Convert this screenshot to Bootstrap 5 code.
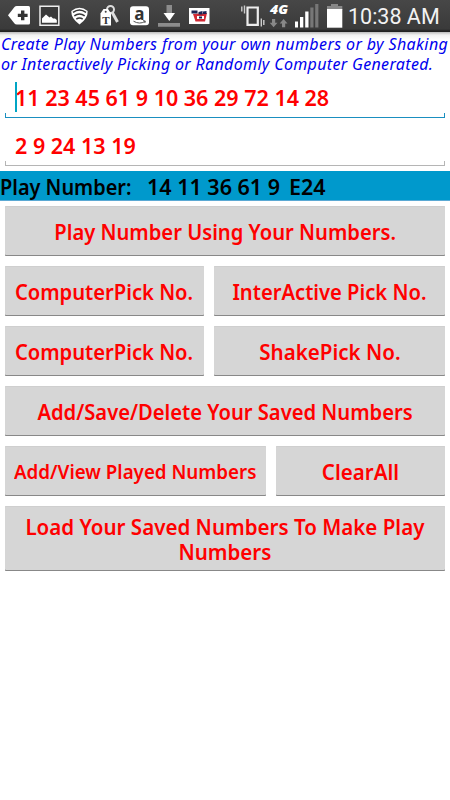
<!DOCTYPE html>
<html lang="en">
<head>
<meta charset="utf-8">
<meta name="viewport" content="width=device-width, initial-scale=1">
<title>Play Numbers</title>
<link href="https://cdn.jsdelivr.net/npm/bootstrap@5.3.0/dist/css/bootstrap.min.css" rel="stylesheet">
<style>
body{font-family:"Noto Sans","Open Sans",sans-serif;background:#fff;color:#f00;overflow:hidden}
.status-bar{height:32px;background:linear-gradient(#474747,#3a3a3a 29px,#222 31px)}
.status-bar svg{width:348px;height:32px}
.clock{font-family:Roboto,sans-serif;font-size:21.5px;line-height:33px;color:#f2f2f2}
.intro{height:49px;padding:2px 0 0 1px;font-size:16px;line-height:20px;color:#00e;font-style:italic;letter-spacing:.39px;background:linear-gradient(#bbb,#f2f2f2 3px,#fff 8px)}
.intro .second{letter-spacing:.34px}
.entry{height:37px;margin:0 5px;padding-left:10px;font-size:21.5px;font-weight:600;line-height:34px}
.entry::after{content:"";position:absolute;left:0;right:0;bottom:0;height:5px;border:1px solid #b5b5b5;border-top:0}
.entry.active::after{border-color:#1a8fc0}
.entry.second{margin-top:11px;margin-bottom:5px}
.caret{position:absolute;left:10px;top:1px;width:2px;height:30px;background:#00a5c5}
.result{height:30px;background:#09c;border-bottom:1px solid #5ba9d4;color:#000;font-size:21.5px;font-weight:600;line-height:31px}
.result .title{width:147px}
.result .draw{width:142px}
.keys{padding:5px;gap:10px}
.keys .key-row{gap:10px}
.btn-key{height:50px;padding:0;border:0;border-radius:1px;background:#d6d6d6;color:#f00;font-size:21.5px;font-weight:600;line-height:25px;box-shadow:inset 0 -1px #888,inset 0 1px #cfcfcf}
.btn-key:hover{background:#c8c8c8;color:#f00}
.w-pick{width:199px}
.w-view{width:261px;font-size:20px}
.key-tall{height:65px}
.fit,.fit-wide{display:inline-block;transform:scaleX(.938)}
.fit-wide{transform:scaleX(.955)}
.result .fit{transform:scaleX(.926);transform-origin:left}
</style>
<script src="https://cdn.jsdelivr.net/npm/bootstrap@5.3.0/dist/js/bootstrap.bundle.min.js"></script>
</head>
<body>
<header class="status-bar d-flex text-nowrap">
<svg class="flex-shrink-0" viewBox="0 0 348 32" fill="#fff">
<!-- back tag with plus -->
<path d="M8 15.2 14.5 7Q15.3 6 16.8 6H28.5Q30 6 30 7.500V23Q30 24.500 28.500 24.500H16.800Q15.300 24.500 14.500 23.500Z"/>
<path d="M21 10.500h3.400v3.200h3.200v3.400h-3.200v3.200H21v-3.200h-3.200v-3.400H21z" fill="#333"/>
<!-- gallery -->
<path d="M40 6.200h18.800v19H40z" fill="#3a3a3a" stroke="#eee" stroke-width="1.500"/>
<path d="M42 22.800v-4.300l4-4 3.500 3 1.500-1 2 2h2l1.800 1.500v2.800z"/>
<!-- wifi shield -->
<path d="M71.300 11Q79.500 4.500 87.700 11Q88 18.500 79.500 24.500Q71 18.500 71.300 11Z"/>
<g fill="none" stroke="#383838" stroke-width="1.500"><path d="M73 12.300Q79.500 7.600 86 12.300"/><path d="M74.300 15.800Q79.500 12 84.700 15.800"/><path d="M76.300 19.200Q79.500 16.800 82.700 19.200"/></g>
<!-- key tags -->
<g fill="none" stroke="#ddd"><circle cx="110.500" cy="9.500" r="3.500" stroke-width="2"/><path d="m112 12 5.500 10" stroke-width="3"/><path d="m108 11-3 2" stroke-width="1.500"/></g>
<path d="M100.500 13.500 103.500 9h4.500l3 4.500v12h-10.500z"/><circle cx="105.700" cy="11.800" r="1" fill="#444"/>
<text x="105.800" y="24" text-anchor="middle" font-family="Liberation Serif,serif" font-weight="700" font-size="11" fill="#333">T</text>
<!-- store -->
<rect x="130" y="6.200" width="19" height="19" rx="3"/>
<text x="139.500" y="19.500" text-anchor="middle" font-family="Open Sans,sans-serif" font-weight="700" font-size="17" fill="#333">a</text>
<path d="M133.500 21.200q6 3.500 11.500.3M143 20.700l2.300.3-.5 2" fill="none" stroke="#555" stroke-width="1"/>
<!-- download -->
<path d="M166.500 5h5.500v8h-5.500zM158 23h22v3.700h-22z" fill="#8c8c8c"/><path d="M163.500 13H175l-5.700 8z"/>
<!-- shop -->
<rect x="189" y="8" width="20.500" height="16"/>
<path d="m193 14 14-1-2 8.500h-9.500z" fill="#d22a35"/><path d="M191.500 10.500h6v3h-6zM198.500 12l4-1v3.500h-4zM203 11.500l3.500-.5v3H203z" fill="#1c2454"/><path d="M197 16h7v3h-7z"/><path d="M199 16.500h3v2h-3z" fill="#1c2454"/>
<!-- vibrate -->
<path d="M247.500 7.500h10.300v17.300h-10.300z" fill="none" stroke="#eee" stroke-width="2.200"/><path d="M244.500 5.500v8M241.800 6.500v5M261.300 18.500v8M263.800 20v5" stroke="#ccc" stroke-width="1.400"/>
<!-- data -->
<text x="270" y="14" textLength="18" lengthAdjust="spacingAndGlyphs" font-family="Open Sans,sans-serif" font-style="italic" font-weight="800" font-size="12">4G</text>
<path d="M272 19h3.200v3.800h2.300l-3.900 4.500-3.900-4.500h2.300zM282 27.300h3.200v-3.800h2.300l-3.900-4.500-3.900 4.500h2.300z" fill="#888"/>
<!-- signal -->
<path d="M295 21.500h3V27.500h-3zM300 17h3.300v10.500H300zM305.200 11.500h3.300v16h-3.300z"/><path d="M310.300 7.500h3.200v20h-3.200zM315.200 4h3.200v23.500h-3.200z" fill="#777"/>
<!-- battery -->
<path d="M331 4h7v2h4.300v4H327V6h4z" fill="#888"/><path d="M327 9h15.300v18.700H327z"/>
</svg>
<span class="clock">10:38 AM</span>
</header>
<div class="intro text-nowrap">Create Play Numbers from your own numbers or by Shaking<br><span class="second">or Interactively Picking or Randomly Computer Generated.</span></div>
<div class="entry active position-relative"><i class="caret"></i>11 23 45 61 9 10 36 29 72 14 28</div>
<div class="entry second position-relative">2 9 24 13 19</div>
<div class="result d-flex text-nowrap"><div class="title"><span class="fit">Play Number:</span></div><div class="draw">14 11 36 61 9</div><div>E24</div></div>
<main class="keys d-flex flex-column">
<button class="btn btn-key"><span class="fit">Play Number Using Your Numbers.</span></button>
<div class="key-row d-flex"><button class="btn btn-key w-pick text-nowrap"><span class="fit">ComputerPick No.</span></button><button class="btn btn-key flex-fill"><span class="fit">InterActive Pick No.</span></button></div>
<div class="key-row d-flex"><button class="btn btn-key w-pick text-nowrap"><span class="fit">ComputerPick No.</span></button><button class="btn btn-key flex-fill"><span class="fit-wide">ShakePick No.</span></button></div>
<button class="btn btn-key"><span class="fit">Add/Save/Delete Your Saved Numbers</span></button>
<div class="key-row d-flex"><button class="btn btn-key w-view text-nowrap"><span class="fit">Add/View Played Numbers</span></button><button class="btn btn-key flex-fill"><span class="fit-wide">ClearAll</span></button></div>
<button class="btn btn-key key-tall"><span class="fit-wide">Load Your Saved Numbers To Make Play<br>Numbers</span></button>
</main>
</body>
</html>
